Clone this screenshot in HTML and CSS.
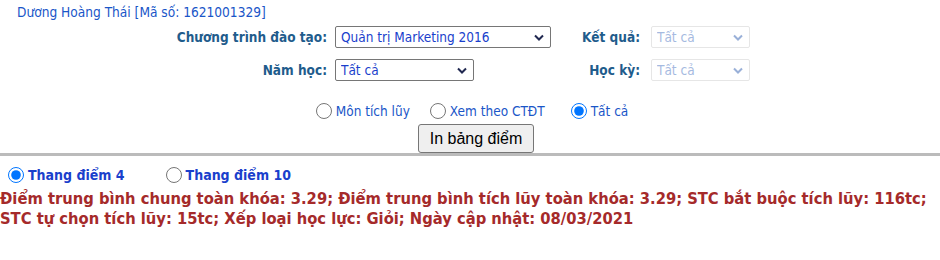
FILE: index.html
```html
<!DOCTYPE html>
<html lang="vi">
<head>
  <meta charset="UTF-8">
  <title>Xem điểm</title>
  <link rel="stylesheet" href="styles.css">
</head>
<body>
  <div class="student">Dương Hoàng Thái [Mã số: 1621001329]</div>

  <div class="filter-grid">
    <label class="lbl" for="ctdt">Chương trình đào tạo:</label>
    <select id="ctdt" class="sel sel-wide"><option>Quản trị Marketing 2016</option></select>
    <label class="lbl" for="ketqua">Kết quả:</label>
    <select id="ketqua" class="sel sel-small" disabled><option>Tất cả</option></select>

    <label class="lbl" for="namhoc">Năm học:</label>
    <div><select id="namhoc" class="sel sel-mid"><option>Tất cả</option></select></div>
    <label class="lbl" for="hocky">Học kỳ:</label>
    <select id="hocky" class="sel sel-small" disabled><option>Tất cả</option></select>
  </div>

  <div class="view-options">
    <label><input type="radio" name="view">Môn tích lũy</label>
    <label><input type="radio" name="view">Xem theo CTĐT</label>
    <label><input type="radio" name="view" checked>Tất cả</label>
  </div>
  <div class="print-row">
    <button class="btn">In bảng điểm</button>
  </div>

  <div class="divider"></div>

  <div class="scale">
    <label><input type="radio" name="scale" checked>Thang điểm 4</label>
    <label><input type="radio" name="scale">Thang điểm 10</label>
  </div>
  <div class="summary">
    Điểm trung bình chung toàn khóa: 3.29; Điểm trung bình tích lũy toàn khóa: 3.29; STC bắt buộc tích lũy: 116tc; STC tự chọn tích lũy: 15tc; Xếp loại học lực: Giỏi; Ngày cập nhật: 08/03/2021
  </div>
</body>
</html>
```

FILE: styles.css
```css
body {
  margin: 0;
  padding: 0;
  font-family: "DejaVu Sans Condensed", "DejaVu Sans", sans-serif;
  font-size: 13px;
  background-color: #fff;
}

.student {
  color: #1a56c8;
  padding: 4px 0 0 17px;
  height: 22px;
  font-size: 13.6px;
}

.filter-grid {
  display: grid;
  grid-template-columns: 327px 216px 81px 99px;
  grid-template-rows: 22px 22px;
  column-gap: 8px;
  row-gap: 11px;
  align-items: center;
}

.lbl {
  text-align: right;
  font-weight: bold;
  color: #1f5c8c;
  font-size: 13.5px;
}

.sel {
  appearance: none;
  font-family: inherit;
  font-size: 13.5px;
  height: 22px;
  padding: 0 20px 0 5px;
  border: 1px solid #767676;
  border-radius: 2px;
  background-color: #fff;
  background-image: url("data:image/svg+xml,%3Csvg xmlns='http://www.w3.org/2000/svg' width='10' height='7'%3E%3Cpath d='M1 1.5l4 4 4-4' fill='none' stroke='%23202850' stroke-width='2'/%3E%3C/svg%3E");
  background-repeat: no-repeat;
  background-position: right 6px center;
  color: #1a3fcc;
}

.sel-wide {
  width: 216px;
}

.sel-mid {
  width: 139px;
}

.sel-small {
  width: 99px;
  margin-left: 3px;
  color: #7f9dd4;
  border-color: #dcdcdc;
  background-image: url("data:image/svg+xml,%3Csvg xmlns='http://www.w3.org/2000/svg' width='10' height='7'%3E%3Cpath d='M1 1.5l4 4 4-4' fill='none' stroke='%236f8fc8' stroke-width='2'/%3E%3C/svg%3E");
}

.view-options {
  display: flex;
  justify-content: center;
  gap: 20px;
  margin-top: 22px;
  padding-left: 4px;
  color: #1a56c8;
  font-size: 13.5px;
  height: 16px;
}

.view-options label {
  display: flex;
  align-items: center;
}

.view-options label:last-child {
  margin-left: 6px;
}

.view-options input {
  margin: 0 4px 0 0;
  width: 16px;
  height: 16px;
}

.print-row {
  text-align: center;
  padding-left: 12px;
  margin-top: 5px;
  height: 29px;
}

.btn {
  font-family: "Liberation Sans", Arial, sans-serif;
  font-size: 16px;
  height: 29px;
  width: 116px;
  padding: 0;
  border: 1px solid #767676;
  border-radius: 3px;
  background-color: #efefef;
  color: #000;
}

.divider {
  height: 3px;
  background-color: #bbb;
}

.scale {
  display: flex;
  gap: 41px;
  padding: 11px 0 0 8px;
  height: 16px;
  font-weight: bold;
  color: #1a3fcc;
  font-size: 14px;
}

.scale label {
  display: flex;
  align-items: center;
}

.scale input {
  margin: 0 4px 0 0;
  width: 16px;
  height: 16px;
}

.summary {
  color: #a52a2a;
  font-weight: bold;
  font-size: 16.4px;
  line-height: 20px;
  margin-top: 6px;
}
```
